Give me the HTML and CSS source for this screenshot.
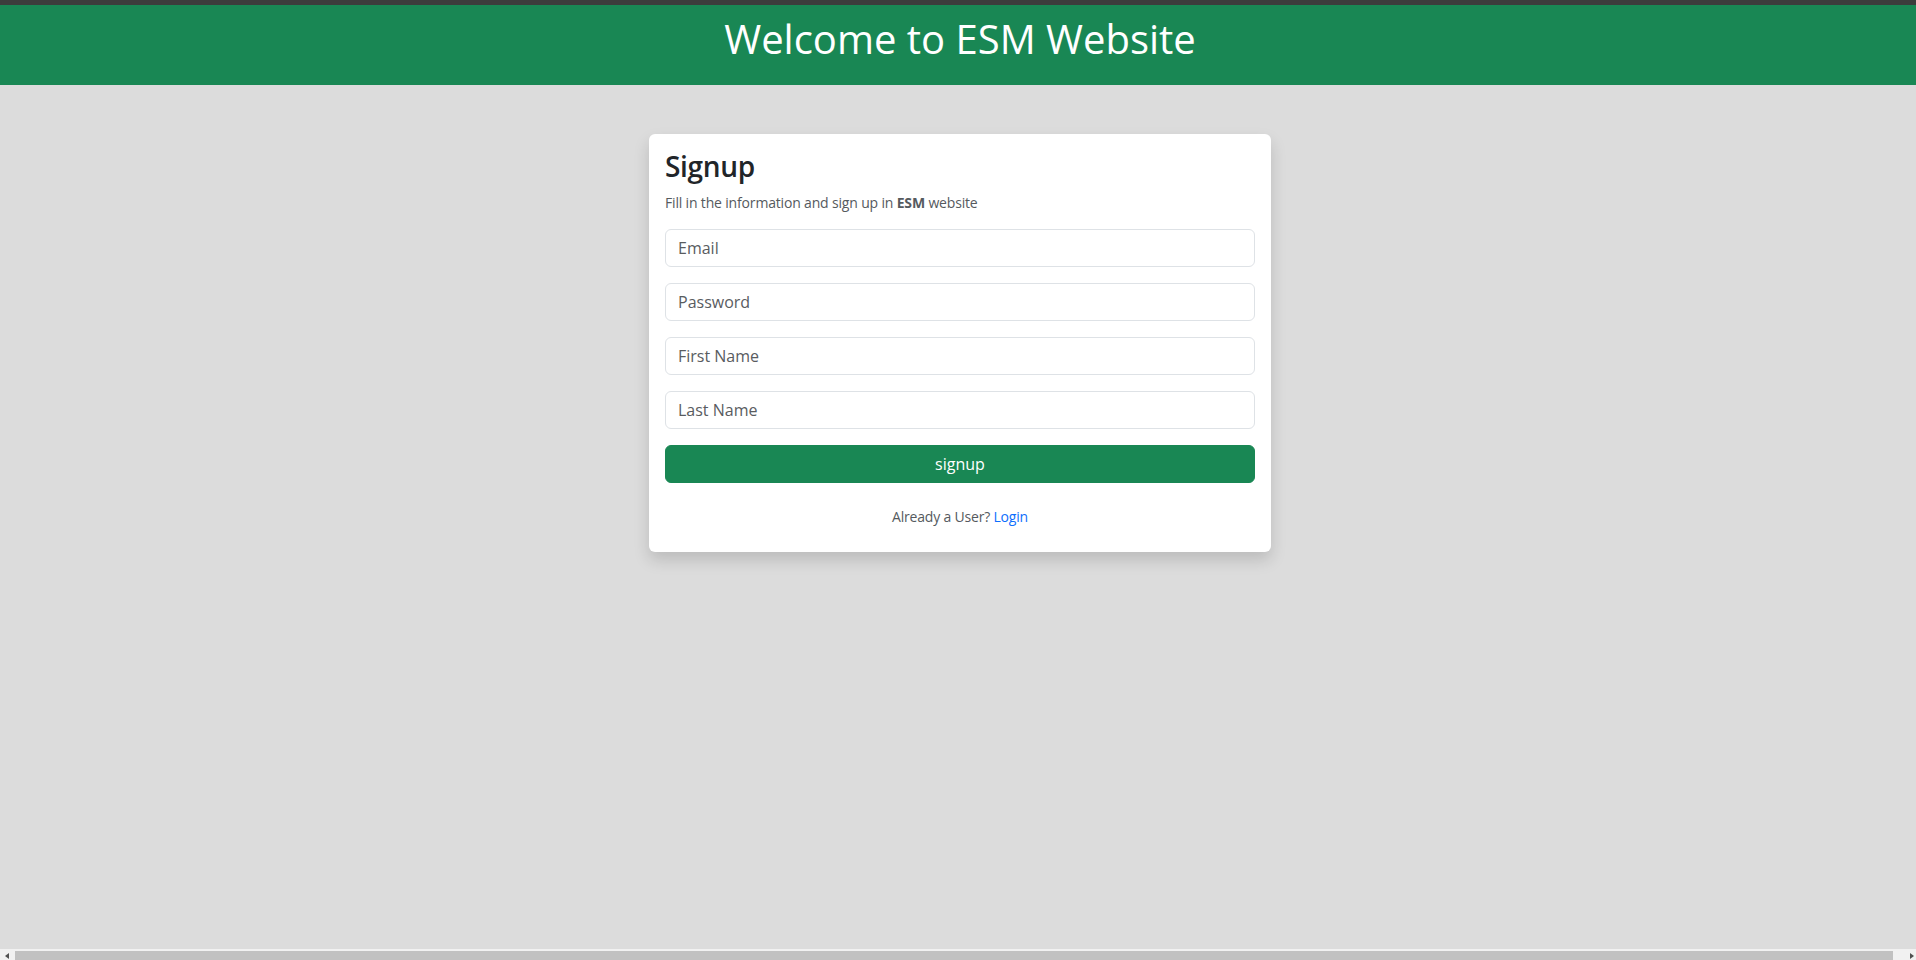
FILE: index.html
```html
<!DOCTYPE html>
<html lang="en">
<head>
<meta charset="utf-8">
<title>ESM Website - Signup</title>
<link rel="stylesheet" href="styles.css">
</head>
<body>
<div class="page">
  <div class="topbar"></div>
  <header class="header">
    <h1 class="header-title">Welcome to ESM Website</h1>
  </header>
  <main class="main">
    <form class="card">
      <h3 class="card-title">Signup</h3>
      <p class="card-subtitle">Fill in the information and sign up in <b>ESM</b> website</p>
      <input class="field" type="email" placeholder="Email">
      <input class="field" type="password" placeholder="Password">
      <input class="field" type="text" placeholder="First Name">
      <input class="field" type="text" placeholder="Last Name">
      <button class="btn" type="button">signup</button>
      <p class="card-footer">Already a User? <a class="link" href="#">Login</a></p>
    </form>
  </main>
</div>
<div class="hscroll">
  <span class="hscroll-arrow hscroll-left"></span>
  <span class="hscroll-thumb"></span>
  <span class="hscroll-arrow hscroll-right"></span>
</div>
</body>
</html>
```

FILE: styles.css
```css
html, body {
  margin: 0;
  padding: 0;
  overflow: hidden;
  height: 100%;
}

body {
  font-family: "Open Sans", "Noto Sans", "Liberation Sans", sans-serif;
  background: #dcdcdc;
  color: #212529;
}

.page {
  width: 1920px;
  min-height: 960px;
  background: #dcdcdc;
  display: flex;
  flex-direction: column;
}

.topbar {
  height: 5px;
  background: #3c3c3c;
}

.header {
  background: #198754;
  height: 80px;
  box-sizing: border-box;
  padding-top: 10px;
  text-align: center;
}

.header-title {
  margin: 0;
  font-size: 40px;
  line-height: 1.2;
  font-weight: 500;
  color: #ffffff;
}

.main {
  display: flex;
  justify-content: center;
  padding-top: 49px;
}

.card {
  width: 622px;
  box-sizing: border-box;
  background: #ffffff;
  border-radius: 6px;
  padding: 16px 16px 16px;
  box-shadow: 0 8px 16px rgba(0, 0, 0, 0.15);
  display: flex;
  flex-direction: column;
}

.card-title {
  margin: 0 0 8px;
  font-size: 28px;
  line-height: 1.2;
  font-weight: 600;
  letter-spacing: -0.3px;
  color: #212529;
}

.card-subtitle {
  margin: 0 0 16px;
  font-size: 14px;
  line-height: 21px;
  letter-spacing: -0.17px;
  color: #555a5e;
}

.card-subtitle b {
  font-weight: 700;
}

.field {
  display: block;
  box-sizing: border-box;
  width: 100%;
  height: 38px;
  margin: 0 0 16px;
  padding: 6px 12px;
  border: 1px solid #dee2e6;
  border-radius: 6px;
  font-family: inherit;
  font-size: 16px;
  color: #212529;
  background: #ffffff;
  outline: none;
}

.field::placeholder {
  color: #595c5f;
  opacity: 1;
}

.btn {
  display: block;
  width: 100%;
  height: 38px;
  border: 1px solid #198754;
  border-radius: 6px;
  background: #198754;
  color: #ffffff;
  font-family: inherit;
  font-size: 16px;
  line-height: 1.5;
  padding: 0;
  cursor: pointer;
}

.card-footer {
  margin: 23px 0 9px;
  text-align: center;
  font-size: 14px;
  line-height: 21px;
  letter-spacing: -0.2px;
  color: #555a5e;
}

.link {
  color: #0d6efd;
  text-decoration: none;
}

/* horizontal scrollbar drawn at the bottom of the viewport */
.hscroll {
  position: fixed;
  left: 0;
  right: 0;
  top: 949px;
  height: 15px;
  background: #f1f1f1;
}

.hscroll-thumb {
  position: absolute;
  left: 15px;
  right: 23px;
  top: 2px;
  height: 11px;
  background: #c1c1c1;
}

.hscroll-arrow {
  position: absolute;
  top: 4px;
  width: 0;
  height: 0;
  border-top: 3.5px solid transparent;
  border-bottom: 3.5px solid transparent;
}

.hscroll-left {
  left: 5px;
  border-right: 4px solid #505050;
}

.hscroll-right {
  right: 2px;
  border-left: 4px solid #505050;
}
```
